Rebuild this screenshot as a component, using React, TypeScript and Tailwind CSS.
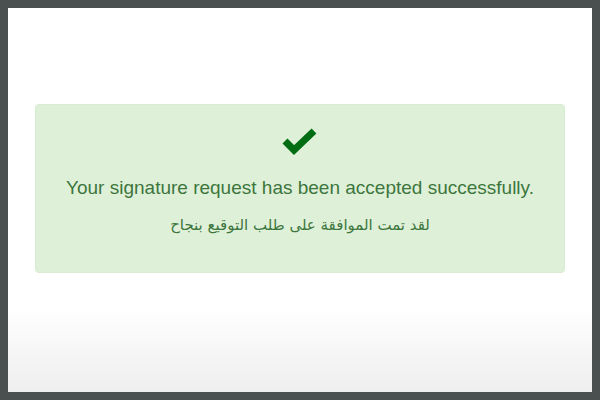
export default function App() {
  return (
    <div className="h-[400px] w-[600px] bg-[#4a5050] p-2">
      <div className="flex h-full flex-col bg-gradient-to-b from-white from-[78%] to-[#eeeeee] px-[27px] pt-[96px]">
        <div className="flex h-[169px] flex-col items-center rounded border border-[#d9ebd2] bg-[#dff0d8] pt-[22px] text-[#3c763d]">
          <svg width="36" height="28" viewBox="0 0 36 28">
            <polyline
              points="3,14 12,23 32,4"
              fill="none"
              stroke="#006d12"
              strokeWidth="7"
              strokeLinecap="butt"
              strokeLinejoin="miter"
            />
          </svg>
          <p className="mt-[21px] font-['Liberation_Sans',Arial,sans-serif] text-[19px] leading-[23px]">
            Your signature request has been accepted successfully.
          </p>
          <p
            dir="rtl"
            className="mt-[15px] font-['DejaVu_Sans',serif] text-[15px] leading-[22px]"
          >
            لقد تمت الموافقة على طلب التوقيع بنجاح
          </p>
        </div>
      </div>
    </div>
  )
}
